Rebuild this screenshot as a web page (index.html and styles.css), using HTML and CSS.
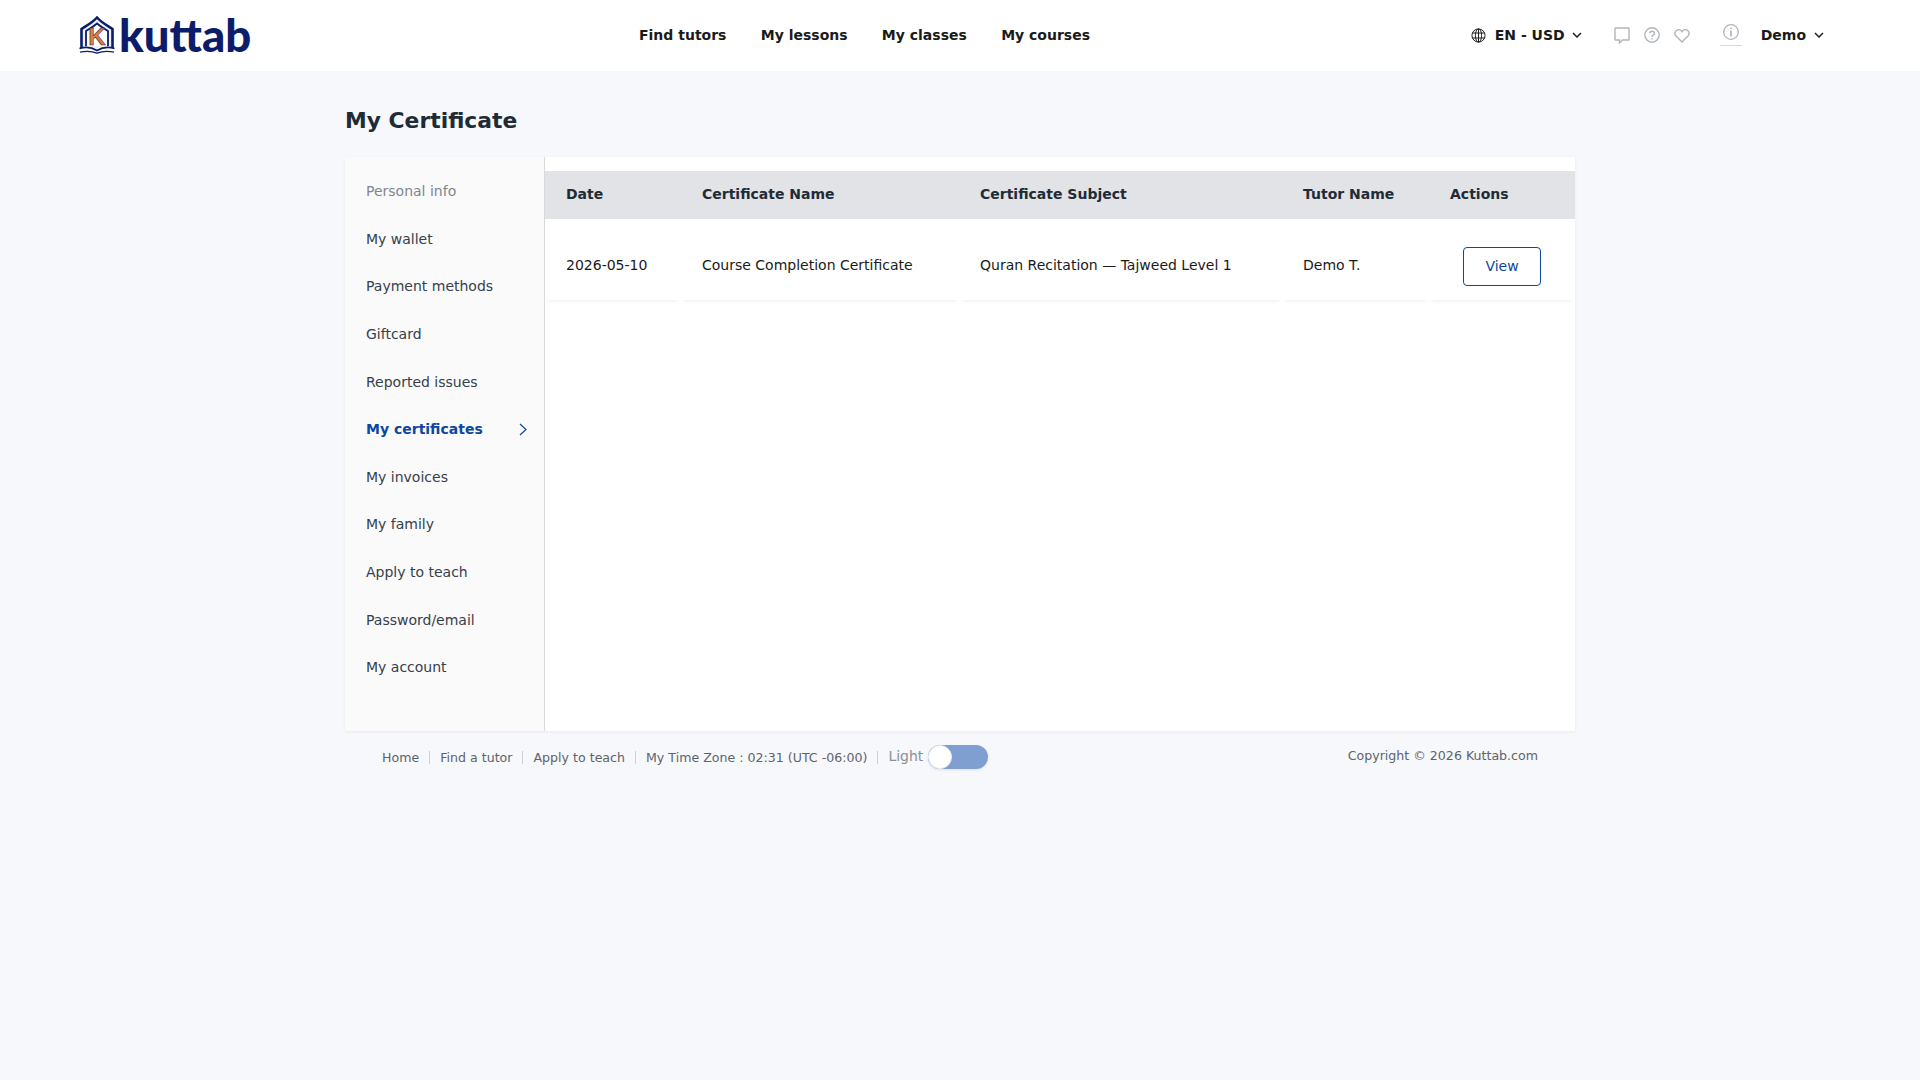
FILE: index.html
```html
<!DOCTYPE html>
<html lang="en">
<head>
    <meta charset="UTF-8">
    <meta name="viewport" content="width=device-width, initial-scale=1.0">
    <title>My Certificate</title>
    <link rel="stylesheet" href="styles.css">
</head>
<body>
    <header class="topbar">
        <a class="logo" href="#">
            <svg class="logo-mark" width="38" height="38" viewBox="0 0 38 38">
                <path d="M3.5 32V13C8 10 14 7 19 1.5C24 7 30 10 34.5 13V32" fill="#eef1f6" stroke="#0b1c6b" stroke-width="2.6"/>
                <path d="M8 30V15C11 13 15 11 19 7.5C23 11 27 13 30 15V30" fill="#fff" stroke="#0b1c6b" stroke-width="1.8"/>
                <text class="logo-k" x="19" y="29" text-anchor="middle">K</text>
                <path d="M1.5 32.5C8 30.5 14 31.5 19 34.5C24 31.5 30 30.5 36.5 32.5" fill="none" stroke="#0b1c6b" stroke-width="1.8"/>
                <path d="M2 36.2C8 34.8 14 35.2 19 37.2C24 35.2 30 34.8 36 36.2" fill="none" stroke="#0b1c6b" stroke-width="1.3"/>
            </svg>
            <span class="logo-text">kuttab</span>
        </a>
        <nav class="main-nav">
            <a href="#">Find tutors</a>
            <a href="#">My lessons</a>
            <a href="#">My classes</a>
            <a href="#">My courses</a>
        </nav>
        <div class="top-right">
            <div class="lang">
                <svg width="15" height="15" viewBox="0 0 24 24" fill="none" stroke="#222" stroke-width="1.6">
                    <circle cx="12" cy="12" r="10.5"/>
                    <ellipse cx="12" cy="12" rx="5" ry="10.5"/>
                    <path d="M12 1.5V22.5M2 8H22M2 16H22"/>
                </svg>
                <span>EN - USD</span>
                <svg class="chev" width="10" height="6" viewBox="0 0 10 6" fill="none" stroke="#222" stroke-width="1.5"><path d="M1 1L5 5L9 1"/></svg>
            </div>
            <div class="top-icons">
                <svg width="16" height="17" viewBox="0 0 16 17" fill="none" stroke="#b0b5bc" stroke-width="1.4"><path d="M1.5 1H14.5Q15 1 15 1.5V12.5Q15 13 14.5 13H8.5L5.5 16V13H1.5Q1 13 1 12.5V1.5Q1 1 1.5 1Z"/></svg>
                <svg width="16" height="16" viewBox="0 0 16 16" fill="none" stroke="#b0b5bc" stroke-width="1.4">
                    <circle cx="8" cy="8" r="7.2"/>
                    <path d="M5.8 6.2C5.8 3.5 10.4 3.5 10.4 6.2C10.4 8 8 8 8 10" stroke-width="1.5"/>
                    <path d="M8 11.2V12.6" stroke-width="1.6"/>
                </svg>
                <svg width="16" height="15" viewBox="0 0 16 15" fill="none" stroke="#b0b5bc" stroke-width="1.4"><path d="M8 14L1.8 7.8C-1.5 3.5 5 -1 8 3.5C11 -1 17.5 3.5 14.2 7.8Z"/></svg>
            </div>
            <div class="notice">
                <svg width="16" height="16" viewBox="0 0 16 16" fill="none" stroke="#b0b5bc" stroke-width="1.3">
                    <circle cx="8" cy="8" r="7.3"/>
                    <path d="M8 6.6V12.6" stroke-width="1.7"/>
                    <path d="M8 3.4V5" stroke-width="1.7"/>
                </svg>
            </div>
            <div class="user">
                <span>Demo</span>
                <svg class="chev" width="10" height="6" viewBox="0 0 10 6" fill="none" stroke="#222" stroke-width="1.5"><path d="M1 1L5 5L9 1"/></svg>
            </div>
        </div>
    </header>

    <main class="page">
        <h1>My Certificate</h1>
        <div class="card">
            <aside class="sidebar">
                <a class="side-link muted" href="#">Personal info</a>
                <a class="side-link" href="#">My wallet</a>
                <a class="side-link" href="#">Payment methods</a>
                <a class="side-link" href="#">Giftcard</a>
                <a class="side-link" href="#">Reported issues</a>
                <a class="side-link active" href="#">My certificates
                    <svg width="8" height="13" viewBox="0 0 8 13" fill="none" stroke="#0d47a1" stroke-width="1.2"><path d="M1 1L7 6.5L1 12"/></svg>
                </a>
                <a class="side-link" href="#">My invoices</a>
                <a class="side-link" href="#">My family</a>
                <a class="side-link" href="#">Apply to teach</a>
                <a class="side-link" href="#">Password/email</a>
                <a class="side-link" href="#">My account</a>
            </aside>
            <section class="content">
                <table class="cert-table">
                    <thead>
                        <tr>
                            <th class="col-date">Date</th>
                            <th class="col-name">Certificate Name</th>
                            <th class="col-subject">Certificate Subject</th>
                            <th class="col-tutor">Tutor Name</th>
                            <th class="col-actions">Actions</th>
                        </tr>
                    </thead>
                    <tbody>
                        <tr>
                            <td>2026-05-10</td>
                            <td>Course Completion Certificate</td>
                            <td>Quran Recitation — Tajweed Level 1</td>
                            <td>Demo T.</td>
                            <td><button class="view-button">View</button></td>
                        </tr>
                    </tbody>
                </table>
            </section>
        </div>
        <footer class="page-footer">
            <div class="foot-links">
                <a href="#">Home</a>
                <a href="#">Find a tutor</a>
                <a href="#">Apply to teach</a>
                <span>My Time Zone : 02:31 (UTC -06:00)</span>
                <div class="theme">
                    <span class="theme-label">Light</span>
                    <span class="toggle"><span class="knob"></span></span>
                </div>
            </div>
            <div class="copyright">Copyright © 2026 Kuttab.com</div>
        </footer>
    </main>
</body>
</html>
```

FILE: styles.css
```css
* {
    box-sizing: border-box;
}
body {
    margin: 0;
    min-height: 1080px;
    background-color: #f7f8fc;
    font-family: "DejaVu Sans", sans-serif;
    font-size: 14px;
    color: #212b36;
}
a {
    color: inherit;
    text-decoration: none;
}
.topbar {
    display: flex;
    align-items: center;
    height: 71px;
    padding: 0 96px 1px 78px;
    background-color: #fff;
}
.logo {
    display: flex;
    align-items: center;
    gap: 3px;
    width: 561px;
    flex-shrink: 0;
}
.logo-mark {
    display: block;
}
.logo-k {
    font-family: "Liberation Sans", sans-serif;
    font-size: 24px;
    font-weight: 700;
    fill: #e77d2c;
    stroke: #0b1c6b;
    stroke-width: 0.5px;
}
.logo-text {
    font-family: "Lato", sans-serif;
    font-size: 45.5px;
    font-weight: 900;
    line-height: 1;
    color: #0b1c6b;
}
.main-nav {
    display: flex;
    gap: 34.3px;
    font-weight: 700;
    color: #1a1a1a;
}
.top-right {
    display: flex;
    align-items: center;
    margin-left: auto;
    font-weight: 700;
    color: #1a1a1a;
}
.lang,
.user {
    display: flex;
    align-items: center;
}
.lang span {
    margin: 0 7px 0 9px;
}
.user span {
    margin-right: 8px;
}
.top-icons {
    display: flex;
    align-items: center;
    gap: 14px;
    margin-left: 32px;
}
.notice {
    display: flex;
    justify-content: center;
    width: 22px;
    margin: 0 19px 0 30px;
    padding-bottom: 5px;
    border-bottom: 1px solid #d8d8d8;
}
.page {
    width: 1230px;
    margin: 0 auto;
}
h1 {
    margin: 0;
    padding: 36px 0 23px;
    font-size: 21.85px;
    line-height: 27px;
    font-weight: 700;
}
.card {
    display: flex;
    height: 574px;
    background-color: #fff;
    box-shadow: 0 1px 3px rgba(0, 0, 0, 0.06);
}
.sidebar {
    width: 200px;
    flex-shrink: 0;
    padding-top: 10.5px;
    background-color: #fafafa;
    border-right: 1px solid #d9d9d9;
}
.side-link {
    display: flex;
    align-items: center;
    justify-content: space-between;
    height: 47.6px;
    padding: 0 17px 0 21px;
    color: #36404a;
}
.side-link.muted {
    color: #80868d;
}
.side-link.active {
    font-weight: 700;
    color: #0d47a1;
}
.content {
    flex: 1;
    padding-top: 14px;
}
.cert-table {
    width: 100%;
    table-layout: fixed;
    border-collapse: separate;
    border-spacing: 0;
}
.col-date { width: 136px; }
.col-name { width: 278px; }
.col-subject { width: 323px; }
.col-tutor { width: 147px; }
.col-actions { width: 146px; }
.cert-table th {
    height: 48px;
    padding: 0 0 3px 21px;
    background-color: #e1e3e7;
    text-align: left;
    font-weight: 700;
    color: #212b36;
}
.cert-table td {
    height: 81px;
    padding: 10px 0 0 21px;
    color: #1a1a1a;
    box-shadow: 0 4px 4px -3px rgba(0, 0, 0, 0.08);
}
.view-button {
    display: block;
    width: 78px;
    height: 39px;
    margin: 3px 0 0 13px;
    background-color: #fff;
    border: 1px solid #0d47a1;
    border-radius: 4px;
    font-family: inherit;
    font-size: 14px;
    color: #0d47a1;
    cursor: pointer;
}
.page-footer {
    display: flex;
    justify-content: space-between;
    padding: 14px 37px 0;
    font-size: 12.6px;
    color: #5f6368;
}
.foot-links {
    display: flex;
    align-items: center;
    height: 24px;
}
.foot-links > a,
.foot-links > span {
    padding-right: 10px;
    margin-right: 10px;
    line-height: 13px;
    border-right: 1px solid #d0d0d0;
}
.theme {
    display: flex;
    align-items: center;
    gap: 5px;
}
.theme-label {
    font-size: 14px;
    color: #8a8f96;
    margin-top: -2px;
}
.toggle {
    display: block;
    width: 60px;
    height: 24px;
    border-radius: 12px;
    background-color: #7f9fd0;
    box-shadow: 0 1px 3px rgba(0, 0, 0, 0.1);
}
.knob {
    display: block;
    width: 24px;
    height: 24px;
    border-radius: 50%;
    background-color: #fff;
    border: 1px solid #e6e9f2;
}
.copyright {
    line-height: 24px;
    margin-top: -1px;
}
```
